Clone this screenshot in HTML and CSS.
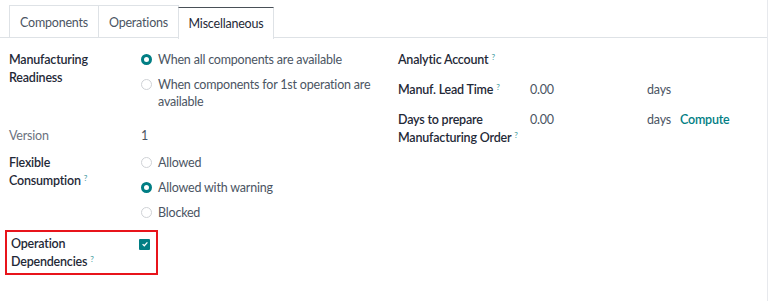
FILE: index.html
```html
<!DOCTYPE html>
<html>
<head>
<meta charset="utf-8">
<link rel="stylesheet" href="styles.css">
</head>
<body>
<div class="page">
  <ul class="tabs">
    <li class="tab">Components</li>
    <li class="tab">Operations</li>
    <li class="tab active">Miscellaneous</li>
  </ul>
  <div class="content">
    <div class="group left">
      <div class="row r-ready">
        <div class="label">Manufacturing<br>Readiness</div>
        <div class="value options">
          <div class="opt"><span class="radio on"></span><span>When all components are available</span></div>
          <div class="opt"><span class="radio"></span><span>When components for 1st operation are available</span></div>
        </div>
      </div>
      <div class="row r-version">
        <div class="label muted">Version</div>
        <div class="value">1</div>
      </div>
      <div class="row r-flex">
        <div class="label">Flexible<br>Consumption<sup class="help">?</sup></div>
        <div class="value options">
          <div class="opt"><span class="radio"></span><span>Allowed</span></div>
          <div class="opt"><span class="radio on"></span><span>Allowed with warning</span></div>
          <div class="opt"><span class="radio"></span><span>Blocked</span></div>
        </div>
      </div>
      <div class="row r-dep highlight">
        <div class="label">Operation<br>Dependencies<sup class="help">?</sup></div>
        <div class="value"><span class="check"><svg viewBox="0 0 10 10" width="8" height="8"><path d="M2 5.2 L4.1 7.2 L8 3" fill="none" stroke="#fff" stroke-width="1.6"/></svg></span></div>
      </div>
    </div>
    <div class="group right">
      <div class="row r-analytic">
        <div class="label">Analytic Account<sup class="help">?</sup></div>
        <div class="value"></div>
      </div>
      <div class="row r-lead">
        <div class="label">Manuf. Lead Time<sup class="help">?</sup></div>
        <div class="value num">0.00</div>
        <div class="unit">days</div>
      </div>
      <div class="row r-prep">
        <div class="label">Days to prepare<br>Manufacturing Order<sup class="help">?</sup></div>
        <div class="value num">0.00</div>
        <div class="unit">days</div>
        <a class="compute">Compute</a>
      </div>
    </div>
  </div>
</div>
</body>
</html>
```
FILE: styles.css
```css
* { box-sizing: border-box; }
html, body { margin: 0; padding: 0; background: #fff; }
body {
  font-family: "Lato", "Noto Sans", sans-serif;
  font-size: 12.5px;
  letter-spacing: -0.2px;
  line-height: 17px;
  color: #374151;
}
.page {
  width: 768px;
  height: 301px;
  border-right: 1px solid #e7e9ed;
}
.tabs {
  list-style: none;
  margin: 0;
  padding: 5px 0 0 9px;
  display: flex;
  border-bottom: 1px solid #dee2e6;
  height: 38px;
}
.tab {
  width: 90px;
  height: 33px;
  border: 1px solid #dee2e6;
  border-bottom: none;
  margin-left: -1px;
  display: flex;
  align-items: center;
  justify-content: center;
  color: #4b5563;
}
.tab:first-child { margin-left: 0; }
.tab:nth-child(2) { width: 81px; }
.tab.active {
  width: 96px;
  color: #1f2937;
  border-top: 1px solid #495057;
  margin-top: 2px;
  margin-bottom: -1px;
  background: #fff;
  height: 32px;
}
.content {
  display: grid;
  grid-template-columns: 398px 1fr;
  padding-top: 13px;
}
.group { display: flex; flex-direction: column; }
.left { padding-left: 9px; }
.row {
  display: grid;
  grid-template-columns: 132px 1fr;
}
.label {
  font-weight: 600;
  font-size: 12.5px;
  line-height: 18px;
  color: #1f2937;
  white-space: nowrap;
}
.label.muted { font-weight: 400; color: #6b7280; }
.value { color: #4b5563; }
.options { display: flex; flex-direction: column; gap: 8px; }
.opt { display: flex; align-items: flex-start; gap: 6px; padding-right: 8px; }
.radio {
  flex: none;
  width: 11px;
  height: 11px;
  border-radius: 50%;
  border: 1px solid #cfd2d6;
  margin-top: 3px;
}
.radio.on { border: 3px solid #017e84; }
.help {
  color: #017e84;
  font-size: 8px;
  font-weight: 400;
  margin-left: 3px;
  vertical-align: top;
  position: relative;
  top: -3px;
  opacity: .8;
}
.r-ready { height: 76px; }
.r-version { height: 27px; }
.r-flex { height: 76px; }
.r-dep {
  margin-left: -4px;
  padding: 3px 0 4px 4px;
  width: 153px;
  height: 45px;
  grid-template-columns: 128px 1fr;
}
.highlight { border: 2px solid #e8141b; }
.check {
  display: inline-flex;
  align-items: center;
  justify-content: center;
  width: 11px;
  height: 11px;
  background: #017e84;
  border-radius: 1px;
  margin-top: 3px;
}
.right .row { grid-template-columns: 132px 117px 33px auto; }
.r-analytic { height: 30px; }
.r-lead { height: 30px; }
.num, .unit { color: #4b5563; }
.compute { color: #017e84; font-weight: 600; }
```
